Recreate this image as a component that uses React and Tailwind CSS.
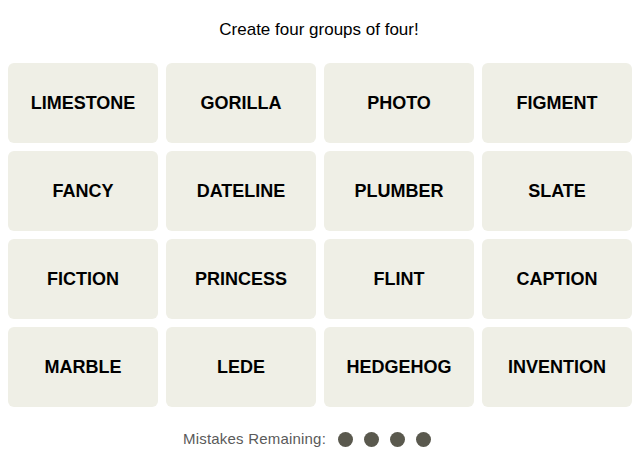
import React from "react";

const words = [
  "LIMESTONE", "GORILLA", "PHOTO", "FIGMENT",
  "FANCY", "DATELINE", "PLUMBER", "SLATE",
  "FICTION", "PRINCESS", "FLINT", "CAPTION",
  "MARBLE", "LEDE", "HEDGEHOG", "INVENTION",
];

export default function App() {
  return (
    <div className="w-[638px] h-[451px] bg-white font-['Liberation_Sans',Arial,sans-serif] text-black">
      <div className="pt-[19px] h-[63px] text-center text-[17px] leading-[22px]">
        Create four groups of four!
      </div>
      <div className="grid grid-cols-[repeat(4,150px)] gap-2 pl-2">
        {words.map((w) => (
          <div
            key={w}
            className="h-20 rounded-md bg-[#efefe6] flex items-center justify-center text-[18px] font-bold"
          >
            {w}
          </div>
        ))}
      </div>
      <div className="mt-[21px] pr-[24px] flex items-center justify-center gap-[12px] text-[15px] tracking-[0.2px] text-[#5a5a5a]">
        <span>Mistakes Remaining:</span>
        <div className="flex gap-[11px]">
          {[0, 1, 2, 3].map((i) => (
            <span key={i} className="w-[15px] h-[15px] rounded-full bg-[#5a594e]" />
          ))}
        </div>
      </div>
    </div>
  );
}
